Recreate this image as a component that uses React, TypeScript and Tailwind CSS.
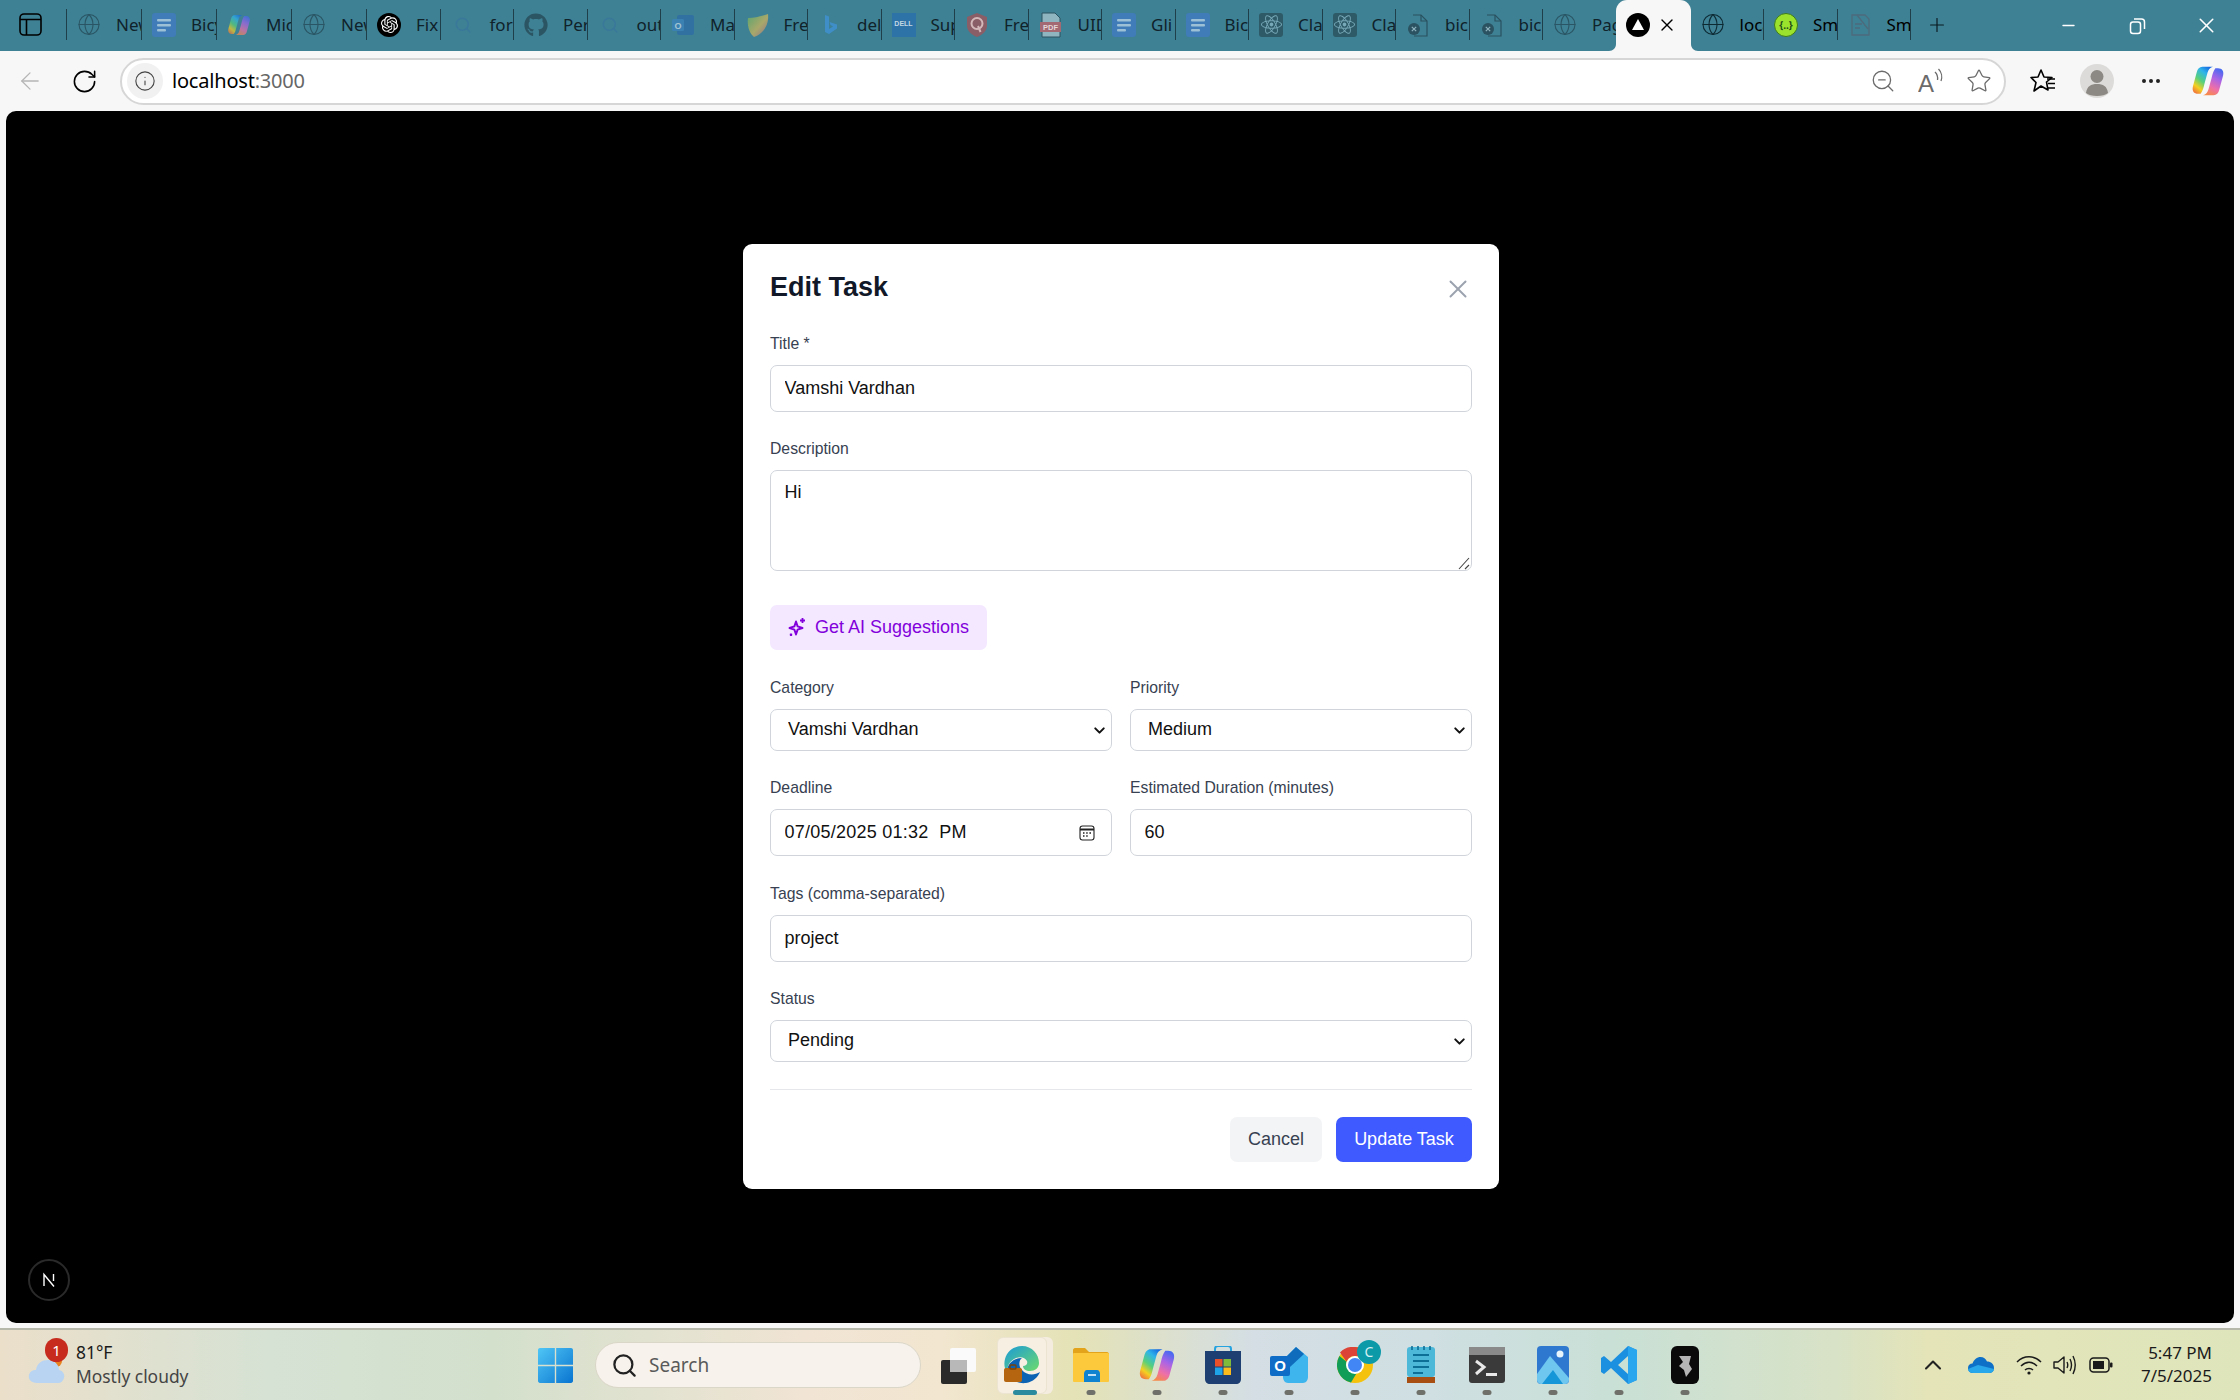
import React from "react";
import { Globe, X, Plus, Minus, Info, ArrowLeft, RotateCw, Star, Search, ZoomOut, ChevronUp, ChevronDown, MoreHorizontal } from "lucide-react";
import { FaGithub, FaReact } from "react-icons/fa";
import { SiOpenai } from "react-icons/si";

const Copilot = ({ s = 24, id = "c" }: { s?: number; id?: string }) => (
  <svg width={s} height={s} viewBox="0 0 24 24">
    <defs>
      <linearGradient id={id + "a"} x1="0.8" y1="0" x2="0.2" y2="1">
        <stop offset="0" stopColor="#1668e0" />
        <stop offset="0.25" stopColor="#2fb4ea" />
        <stop offset="0.55" stopColor="#58d07a" />
        <stop offset="0.8" stopColor="#f5d020" />
        <stop offset="1" stopColor="#f07a3c" />
      </linearGradient>
      <linearGradient id={id + "b"} x1="0.7" y1="0" x2="0.3" y2="1">
        <stop offset="0" stopColor="#4a6af0" />
        <stop offset="0.35" stopColor="#a964e6" />
        <stop offset="0.7" stopColor="#ee6fa8" />
        <stop offset="1" stopColor="#f58a4a" />
      </linearGradient>
    </defs>
    <path d="M8 2H15.5C13.5 2.5 12.3 4 11.7 6L9.5 14C8.8 17 8.3 19 6.8 21H5C2 21 0.7 19 1.3 16L4 6C4.6 3.5 6 2 8 2Z" fill={`url(#${id}a)`} />
    <path d="M16 22H8.5C10.5 21.5 11.7 20 12.3 18L14.5 10C15.2 7 15.7 5 17.2 3H19C22 3 23.3 5 22.7 8L20 18C19.4 20.5 18 22 16 22Z" fill={`url(#${id}b)`} />
  </svg>
);

const DocIcon = () => (
  <svg width="24" height="24" viewBox="0 0 24 24">
    <rect width="24" height="24" rx="3" fill="#3f7cb8" />
    <rect x="5" y="6" width="14" height="2.6" rx="1" fill="#9cc0d6" />
    <rect x="5" y="11" width="14" height="2.6" rx="1" fill="#9cc0d6" />
    <rect x="5" y="16" width="9" height="2.6" rx="1" fill="#9cc0d6" />
  </svg>
);

const GlobeDim = () => <Globe size={25} strokeWidth={1.1} className="text-[#2a5564]" />;
const SearchDim = () => <Search size={18} strokeWidth={2} className="text-[#3a789a] ml-[1px]" />;
const ReactBox = () => (
  <span className="w-[24px] h-[24px] rounded-[3px] bg-[#2e5a67] flex items-center justify-center">
    <FaReact size={21} className="text-[#78a9b8]" />
  </span>
);
const XFile = () => (
  <svg width="24" height="26" viewBox="0 0 24 26" fill="none">
    <path d="M7 3H15L21 9V24H8" stroke="#2a5260" strokeWidth="1.2" />
    <path d="M15 3V9H21" stroke="#2a5260" strokeWidth="1.2" />
    <circle cx="8" cy="17" r="6" fill="#2a5260" />
    <path d="M5.8 14.8L10.2 19.2M10.2 14.8L5.8 19.2" stroke="#8eb3bf" strokeWidth="1.2" />
  </svg>
);

const tabs: [React.ReactNode, string][] = [
  [<GlobeDim />, "New tab"],
  [<DocIcon />, "Bicycle"],
  [<span className="opacity-70"><Copilot id="t1" /></span>, "Microsoft"],
  [<GlobeDim />, "New tab"],
  [<span className="w-[24px] h-[24px] rounded-full bg-black flex items-center justify-center"><SiOpenai size={17} className="text-white" /></span>, "Fix"],
  [<SearchDim />, "for"],
  [<FaGithub size={24} className="text-[#2c5564]" />, "Per"],
  [<SearchDim />, "out"],
  [
    <svg width="24" height="24" viewBox="0 0 24 24" opacity="0.75">
      <rect x="6" y="2" width="17" height="20" rx="2" fill="#2d6ca6" />
      <rect x="1" y="6" width="12" height="12" rx="1.5" fill="#3a83bd" />
      <text x="7" y="15.5" textAnchor="middle" fontSize="9" fontWeight="700" fill="#c7dbe6" fontFamily="Liberation Sans">O</text>
    </svg>,
    "Ma",
  ],
  [
    <svg width="24" height="24" viewBox="0 0 24 24">
      <defs>
        <linearGradient id="shd" x1="0" y1="0" x2="1" y2="1">
          <stop offset="0" stopColor="#5aa56e" />
          <stop offset="0.55" stopColor="#a9a86a" />
          <stop offset="1" stopColor="#8e6f8e" />
        </linearGradient>
      </defs>
      <path d="M3 5C10 5 16 3 23 1C24 10 20 20 9 24C4 20 2 12 3 5Z" fill="url(#shd)" />
    </svg>,
    "Free",
  ],
  [
    <svg width="24" height="24" viewBox="0 0 24 24">
      <path d="M7 2L11 3.5V16L15 13.5L12.5 12L11.5 9L19 11.5V15.5L11 21L7 19Z" fill="#3f8ec7" />
    </svg>,
    "del",
  ],
  [
    <span className="w-[24px] h-[24px] bg-[#2e73a8] flex items-center justify-center text-[7px] font-['Liberation_Sans'] text-[#c3d8e3] font-bold">DELL</span>,
    "Sup",
  ],
  [
    <svg width="24" height="26" viewBox="0 0 24 26" fill="none">
      <path d="M12 1L22 5V14C22 19 17 23 12 25C7 23 2 19 2 14V5Z" fill="#8a5e66" />
      <circle cx="12" cy="11.5" r="5.5" stroke="#d3b8ba" strokeWidth="2" />
      <path d="M13 14L15.5 20" stroke="#d3b8ba" strokeWidth="2" />
    </svg>,
    "Free",
  ],
  [
    <svg width="24" height="26" viewBox="0 0 24 26">
      <path d="M3 1H16L21 6V25H3Z" fill="#8fb5c0" stroke="#2a5260" strokeWidth="1" />
      <rect x="1" y="10" width="21" height="10" fill="#a36a74" />
      <text x="11.5" y="18" textAnchor="middle" fontSize="7.5" fontWeight="700" fill="#e5d8da" fontFamily="Liberation Sans">PDF</text>
    </svg>,
    "UID",
  ],
  [<DocIcon />, "Gli"],
  [<DocIcon />, "Bic"],
  [<ReactBox />, "Cla"],
  [<ReactBox />, "Cla"],
  [<XFile />, "bic"],
  [<XFile />, "bic"],
  [<GlobeDim />, "Pag"],
];

const Tab = ({ icon, label, dark, wide }: { icon: React.ReactNode; label: string; dark?: boolean; wide?: boolean }) => (
  <div className={`${wide ? "w-[75px]" : "w-[73.5px]"} h-[31px] -mt-[2px] shrink-0 flex items-center pl-[10px] border-r border-[#1f3f4b] overflow-hidden`}>
    <span className="w-[24px] shrink-0 flex items-center justify-center">{icon}</span>
    <span className={`ml-[15px] text-[17px] whitespace-nowrap ${dark ? "text-black" : "text-[#10222a]"}`}>{label}</span>
  </div>
);

const TabBar = () => (
  <div className="h-[51px] shrink-0 bg-[#3e8194] flex items-center font-['Noto_Sans',sans-serif]">
    <div className="w-[67px] h-[31px] -mt-[2px] shrink-0 border-r border-[#1f3f4b] flex items-center pl-[19px]">
      <svg width="23" height="23" viewBox="0 0 23 23" fill="none" stroke="#000" strokeWidth="1.6">
        <rect x="1" y="1" width="21" height="21" rx="4" />
        <path d="M1 6.5H22M7.5 6.5V22" />
      </svg>
    </div>
    {tabs.map(([icon, label], i) => (
      <Tab key={i} icon={icon} label={label} wide={i < 4} />
    ))}
    <div className="relative w-[75px] h-[51px] shrink-0 -ml-px bg-[#f7f7f7] rounded-t-[11px] flex items-center pl-[10px] pb-[2px] gap-[7px]">
      <svg className="absolute left-[-7px] bottom-0" width="7" height="7" viewBox="0 0 7 7"><path d="M7 0V7H0C4 7 7 4 7 0Z" fill="#f7f7f7" /></svg>
      <svg className="absolute right-[-7px] bottom-0" width="7" height="7" viewBox="0 0 7 7"><path d="M0 0V7H7C3 7 0 4 0 0Z" fill="#f7f7f7" /></svg>
      <svg width="24" height="24" viewBox="0 0 24 24">
        <circle cx="12" cy="12" r="12" fill="#000" />
        <path d="M12 6L18 17H6Z" fill="#fff" />
      </svg>
      <X size={20} strokeWidth={1.6} className="text-black" />
    </div>
    <Tab icon={<Globe size={25} strokeWidth={1.1} className="text-[#0d2a33]" />} label="localhost" dark />
    <Tab
      icon={
        <span className="w-[24px] h-[24px] rounded-full bg-[#9be22d] border border-[#3d7a20] flex items-center justify-center text-[10px] font-bold text-[#1e4a1a] leading-none">
          {"{..}"}
        </span>
      }
      label="Smart"
      dark
    />
    <Tab
      icon={
        <svg width="22" height="24" viewBox="0 0 22 24" fill="none" stroke="#4c6b7c" strokeWidth="1.3">
          <path d="M3 2H16L20 6V22H3Z" />
          <path d="M6 11H13M6 15H11M8 2L19 16" />
        </svg>
      }
      label="Smart"
      dark
    />
    <span className="ml-[15px] w-[22px] -mt-[2px] flex justify-center">
      <Plus size={30} strokeWidth={1.3} className="text-[#0b1a20]" />
    </span>
    <div className="ml-auto flex items-center text-white h-full">
      <span className="w-[69px] flex justify-center"><Minus size={19} strokeWidth={1.6} /></span>
      <span className="w-[69px] flex justify-center">
        <svg width="17" height="18" viewBox="0 0 17 18" fill="none" stroke="#fff" strokeWidth="1.5">
          <rect x="1.5" y="5" width="10" height="11.5" rx="2.5" />
          <path d="M5 2H12.5C14.5 2 15.5 3 15.5 5V12" />
        </svg>
      </span>
      <span className="w-[68px] flex justify-center"><X size={25} strokeWidth={1.5} /></span>
    </div>
  </div>
);

const Toolbar = () => (
  <div className="h-[60px] shrink-0 bg-[#f7f7f7] flex items-center font-['Noto_Sans',sans-serif]">
    <span className="ml-[6px] w-[48px] flex justify-center"><ArrowLeft size={28} strokeWidth={1.1} className="text-[#b5b5b5]" /></span>
    <span className="ml-[6px] w-[48px] flex justify-center"><RotateCw size={27} strokeWidth={1.4} className="text-black" /></span>
    <div className="ml-[12px] w-[1886px] h-[47px] rounded-full border-2 border-[#d6d6d6] bg-white flex items-center">
      <span className="ml-[5px] w-[36px] h-[36px] rounded-full bg-[#f1f1f1] flex items-center justify-center">
        <Info size={22} strokeWidth={1.2} className="text-[#444]" />
      </span>
      <span className="ml-[9px] text-[20px] leading-none text-black tracking-[-0.2px]">
        localhost<span className="text-[#666]">:3000</span>
      </span>
      <div className="ml-auto mr-[1px] flex items-center text-[#6b6b6b]">
        <span className="w-[48px] flex justify-center"><ZoomOut size={26} strokeWidth={1.2} /></span>
        <span className="w-[48px] flex justify-center">
          <svg width="26" height="28" viewBox="0 0 26 28" fill="none" stroke="#6b6b6b" strokeWidth="1.3">
            <text x="0" y="25" fontSize="24" fill="#6b6b6b" stroke="none" fontFamily="Liberation Sans">A</text>
            <path d="M17 5C19 7 20 10 19.5 13M20.5 2C23.5 5 24.5 10 23 14" />
          </svg>
        </span>
        <span className="w-[48px] flex justify-center"><Star size={26} strokeWidth={1.2} /></span>
      </div>
    </div>
    <span className="ml-[10px] w-[54px] flex justify-center">
      <svg width="28" height="28" viewBox="0 0 28 28" fill="none" stroke="#000" strokeWidth="1.6">
        <path d="M12 3L15 10L23 10.5L17.5 15L19 23L12 19L5 24L7 15.5L2 10.5L9 10Z" strokeLinejoin="round" />
        <path d="M18 12H26M19 16.5H26M19 21H26" />
      </svg>
    </span>
    <span className="w-[54px] flex justify-center">
      <svg width="34" height="34" viewBox="0 0 34 34">
        <circle cx="17" cy="17" r="17" fill="#dcdbd9" />
        <circle cx="17" cy="12.5" r="6.5" fill="#8c8883" />
        <path d="M6 29C7 22 11 20 17 20C23 20 27 22 28 29C24 33 10 33 6 29Z" fill="#8c8883" />
      </svg>
    </span>
    <span className="w-[54px] flex justify-center"><MoreHorizontal size={24} strokeWidth={2} className="text-[#222]" /></span>
    <span className="ml-[3px] w-[54px] flex justify-center"><Copilot s={34} id="t2" /></span>
  </div>
);

const labelCls = "block h-[23px] mb-[10px] text-[15.75px] leading-[23px] text-[#374151]";
const inputCls =
  "block w-full h-[47px] px-[13.5px] rounded-[7px] border border-[#d1d5db] bg-white text-[18px] text-[#111] outline-none";
const selectCls =
  "block w-full h-[42px] pl-[17px] pr-[30px] appearance-none rounded-[7px] border border-[#d1d5db] bg-white text-[18px] text-[#111] outline-none";

const Field = ({ label, children }: { label: string; children: React.ReactNode }) => (
  <div className="min-w-0">
    <label className={labelCls}>{label}</label>
    {children}
  </div>
);

const Select = ({ value }: { value: string }) => (
  <div className="relative">
    <select className={selectCls} defaultValue={value}>
      <option value={value}>{value}</option>
    </select>
    <ChevronDown size={17} strokeWidth={2.8} className="absolute right-[4px] top-[13px] text-[#111] pointer-events-none" />
  </div>
);

const Modal = () => (
  <div className="w-[756px] ml-[2px] -mt-[2px] bg-white rounded-[9px] p-[27px] font-['Liberation_Sans',Arial,sans-serif]">
    <div className="flex items-center justify-between h-[36px] mb-[25px]">
      <h2 className="-mt-[3px] text-[27px] leading-[36px] font-bold text-[#111827]">Edit Task</h2>
      <X size={30} strokeWidth={1.6} className="text-[#9ca3af] mr-[-1px]" />
    </div>
    <form className="flex flex-col gap-[26px]">
      <Field label="Title *">
        <input className={inputCls} defaultValue="Vamshi Vardhan" />
      </Field>
      <div className="-mt-[1px]">
        <Field label="Description">
          <div className="relative">
            <textarea className="block w-full h-[101px] px-[13.5px] py-[8px] resize-none rounded-[7px] border border-[#d1d5db] bg-white text-[18px] leading-[27px] text-[#111] outline-none" defaultValue="Hi" />
            <svg className="absolute right-[1px] bottom-[1px]" width="14" height="14" viewBox="0 0 14 14" fill="none" stroke="#444" strokeWidth="1.1">
              <path d="M2 13L12 2M8 13L12 9" />
            </svg>
          </div>
        </Field>
      </div>
      <button type="button" className="mt-[8px] self-start h-[45px] w-[217px] rounded-[7px] bg-[#f3e8ff] text-[#8200db] text-[18px] flex items-center justify-center gap-[8px]">
        <svg width="19" height="20" viewBox="0 0 19 20" fill="none" stroke="#8200db" strokeWidth="1.9" strokeLinejoin="round">
          <path d="M8 4.5L9.6 9.4L14.5 11L9.6 12.6L8 17.5L6.4 12.6L1.5 11L6.4 9.4Z" />
          <path d="M14.5 1V6M12 3.5H17M3 16.5V19M1.8 17.7H4.2" strokeWidth="1.8" />
        </svg>
        <span>Get AI Suggestions</span>
      </button>
      <div className="grid grid-cols-2 gap-x-[18px]">
        <Field label="Category"><Select value="Vamshi Vardhan" /></Field>
        <Field label="Priority"><Select value="Medium" /></Field>
      </div>
      <div className="grid grid-cols-2 gap-x-[18px] -mt-[1px]">
        <Field label="Deadline">
          <div className="relative">
            <input className={`${inputCls} tracking-[0.25px]`} defaultValue="07/05/2025 01:32  PM" />
            <svg className="absolute right-[17px] top-[16px]" width="16" height="16" viewBox="0 0 16 16" fill="none" stroke="#222" strokeWidth="1.1">
              <rect x="1" y="1" width="14" height="14" rx="2.5" />
              <path d="M1 4.5H15" strokeWidth="2" />
              <path d="M4 8H5.5M7.2 8H8.7M10.4 8H12M4 11H5.5M7.2 11H8.7" strokeWidth="1.5" />
            </svg>
          </div>
        </Field>
        <Field label="Estimated Duration (minutes)">
          <input className={inputCls} defaultValue="60" />
        </Field>
      </div>
      <Field label="Tags (comma-separated)">
        <input className={inputCls} defaultValue="project" />
      </Field>
      <div className="-mt-[1px]">
        <Field label="Status"><Select value="Pending" /></Field>
      </div>
    </form>
    <div className="mt-[27px] pt-[27px] border-t border-[#e5e7eb] flex justify-end gap-[14px]">
      <button type="button" className="w-[92px] h-[45px] rounded-[7px] bg-[#f3f4f6] text-[#374151] text-[18px]">Cancel</button>
      <button type="button" className="w-[136px] h-[45px] rounded-[7px] bg-[#3f5bff] text-white text-[18px]">Update Task</button>
    </div>
  </div>
);

const Dot = ({ active }: { active?: boolean }) => (
  <span className={`absolute bottom-[-1px] left-1/2 -translate-x-1/2 h-[5px] rounded-full ${active ? "w-[24px] bg-[#2a8a9e]" : "w-[9px] bg-[#70706a]"}`} />
);

const Cell = ({ children, dot, active }: { children: React.ReactNode; dot?: boolean; active?: boolean }) => (
  <div className="relative w-[66px] h-[57px] shrink-0 flex items-center justify-center">
    {active && <span className="absolute inset-y-0 left-[5px] right-[11px] rounded-[6px] bg-[#f6efe2] border border-[#ece3d0] shadow-[6px_0_0_#f3ecdf]" />}
    <span className="relative flex">{children}</span>
    {dot && <Dot active={active} />}
  </div>
);

const Taskbar = () => (
  <div className="h-[72px] shrink-0 border-t-2 border-[#b6b9aa] bg-[linear-gradient(90deg,#ebdfca_0%,#d6e2d4_12%,#d3e0cc_22%,#f1e4d4_36%,#f2e6d0_42%,#e4e2b6_48%,#d4dee4_56%,#cfdfe2_64%,#c9e0d6_72%,#d8e2c6_82%,#e4e4b8_86%,#dfe5bb_100%)] flex items-center font-['Noto_Sans',sans-serif] text-[#1a1a1a]">
    <div className="w-[530px] shrink-0 flex items-center pl-[28px]">
      <span className="relative w-[40px] h-[40px] flex items-end">
        <svg width="38" height="30" viewBox="0 0 38 30">
          <circle cx="28" cy="6" r="6" fill="#e8821e" />
          <path d="M9 28C3 28 0 24 1 20C2 16 5 15 8 15C9 8 14 5 20 5C27 5 31 10 31 15C35 16 37 19 36 23C35 26 33 28 30 28Z" fill="#b8d4f2" />
        </svg>
        <span className="absolute top-[-7px] left-[17px] w-[23px] h-[24px] rounded-full bg-[#c62b1e] text-white text-[15px] leading-[24px] text-center">1</span>
      </span>
      <div className="ml-[8px] -mt-[2px] flex flex-col text-[17.4px] leading-[24px]">
        <span>81°F</span>
        <span className="text-[#444]">Mostly cloudy</span>
      </div>
    </div>
    <span className="w-[50px] shrink-0 flex justify-center">
      <svg width="35" height="35" viewBox="0 0 36 36">
        <defs>
          <linearGradient id="win" x1="0" y1="0" x2="1" y2="1">
            <stop offset="0" stopColor="#4fc6f5" />
            <stop offset="1" stopColor="#0a74d0" />
          </linearGradient>
        </defs>
        <path d="M0 2C0 1 1 0 2 0H17.3V17.3H0ZM18.7 0H34C35 0 36 1 36 2V17.3H18.7ZM0 18.7H17.3V36H2C1 36 0 35 0 34ZM18.7 18.7H36V34C36 35 35 36 34 36H18.7Z" fill="url(#win)" />
      </svg>
    </span>
    <div className="ml-[15px] w-[326px] h-[46px] shrink-0 rounded-full bg-[#f7f3ec] border border-[#dad6c8] flex items-center pl-[15px]">
      <Search size={27} strokeWidth={2} className="text-[#222]" />
      <span className="ml-[11px] text-[19px] text-[#5a5a5a]">Search</span>
    </div>
    <div className="ml-[5px] flex items-center">
      <Cell>
        <svg width="36" height="38" viewBox="0 0 36 38">
          <rect x="9" y="2" width="26" height="24" rx="2" fill="#fafafa" />
          <rect x="0" y="14" width="26" height="24" rx="2" fill="#2a2a2a" />
          <rect x="9" y="14" width="17" height="12" fill="#b8b8b8" />
        </svg>
      </Cell>
      <Cell dot active>
        <svg width="36" height="38" viewBox="0 0 36 38" className="-ml-[6px]">
          <defs>
            <linearGradient id="edg" x1="0" y1="0" x2="1" y2="1">
              <stop offset="0" stopColor="#1a9ad8" />
              <stop offset="1" stopColor="#6fdc6a" />
            </linearGradient>
          </defs>
          <path d="M18 0C28 0 35 8 35 17C35 22 31 25 26 25C22 25 19 23 19 20C22 20 24 18 23 15C21 11 15 10 10 13C5 16 3 21 3 26C0 22 0 17 1 13C3 5 10 0 18 0Z" fill="url(#edg)" />
          <path d="M3 26C6 34 14 38 22 37C29 36 34 31 36 26C30 30 22 29 18 24C14 20 15 14 18 12C9 12 3 18 3 26Z" fill="#0d63b3" />
          <rect x="0" y="22" width="18" height="14" rx="2" fill="#b5640f" />
          <rect x="6" y="19" width="6" height="4" rx="1" fill="none" stroke="#7a4308" strokeWidth="1.4" />
        </svg>
      </Cell>
      <Cell dot>
        <svg width="36" height="34" viewBox="0 0 36 34">
          <path d="M0 2C0 1 1 0 2 0H12L16 4H34C35 4 36 5 36 6V12H0Z" fill="#e3a31a" />
          <rect y="5" width="36" height="29" rx="1" fill="#fcc93c" />
          <path d="M11 34V26C11 24 12 22 14 22H24C26 22 27 24 27 26V34Z" fill="#0f82d0" />
          <rect x="15" y="26" width="8" height="2" fill="#bfe0f5" />
        </svg>
      </Cell>
      <Cell dot><Copilot s={38} id="t3" /></Cell>
      <Cell dot>
        <svg width="36" height="38" viewBox="0 0 36 38">
          <path d="M10 6V3C10 1 11 0 13 0H23C25 0 26 1 26 3V6" fill="none" stroke="#24a3e0" strokeWidth="2" />
          <path d="M0 5H36V33C36 36 34 38 31 38H5C2 38 0 36 0 33Z" fill="#1d3f72" />
          <rect x="10" y="13" width="7.5" height="7.5" fill="#e8502a" />
          <rect x="18.5" y="13" width="7.5" height="7.5" fill="#7fba3a" />
          <rect x="10" y="21.5" width="7.5" height="7.5" fill="#1fa3e8" />
          <rect x="18.5" y="21.5" width="7.5" height="7.5" fill="#fbbb1a" />
        </svg>
      </Cell>
      <Cell dot>
        <svg width="38" height="36" viewBox="0 0 38 36">
          <path d="M16 10L26 0L38 10V30C38 33 36 36 33 36H18C15 36 13 33 13 30V10Z" fill="#3fb5ee" />
          <path d="M16 10L26 0L34 7L20 20L13 15Z" fill="#0f6cbd" />
          <rect x="0" y="9" width="20" height="20" rx="2" fill="#0e6cc7" />
          <text x="10" y="24" textAnchor="middle" fontSize="15" fontWeight="700" fill="#fff" fontFamily="Liberation Sans">O</text>
        </svg>
      </Cell>
      <Cell dot>
        <span className="relative flex w-[36px] h-[36px]">
          <svg width="36" height="36" viewBox="0 0 36 36">
            <circle cx="18" cy="18" r="18" fill="#f4c20d" />
            <path d="M18 0A18 18 0 0 1 33.6 9H18A9 9 0 0 0 9.6 14.8L3 5.5A18 18 0 0 1 18 0Z" fill="#db4437" />
            <path d="M2.4 9A18 18 0 0 0 14 35.6L20 25.5A9 9 0 0 1 9.6 14.8Z" fill="#0f9d58" />
            <circle cx="18" cy="18" r="9" fill="#fff" />
            <circle cx="18" cy="18" r="7" fill="#4285f4" />
          </svg>
          <span className="absolute top-[-7px] left-[20px] w-[24px] h-[24px] rounded-full bg-[#0d9aa8] text-[#d4f0f2] text-[14px] leading-[24px] text-center">C</span>
        </span>
      </Cell>
      <Cell dot>
        <svg width="28" height="38" viewBox="0 0 28 38">
          <rect x="0" y="1" width="28" height="30" rx="3" fill="#4db8d8" />
          <rect x="0" y="31" width="28" height="6" fill="#a94e12" />
          <path d="M6 9H22M6 15H22M6 21H22M6 27H16" stroke="#0d6e96" strokeWidth="1.8" />
          <path d="M5 0V4M11 0V4M17 0V4M23 0V4" stroke="#0d6e96" strokeWidth="1.6" />
        </svg>
      </Cell>
      <Cell dot>
        <svg width="36" height="36" viewBox="0 0 36 36">
          <rect width="36" height="36" rx="3" fill="#3a3a3a" />
          <rect width="36" height="8" fill="#8a8a8a" />
          <path d="M7 14L15 20L7 27" stroke="#e8e8e8" strokeWidth="3" fill="none" />
          <rect x="17" y="26" width="11" height="3" fill="#e8e8e8" />
        </svg>
      </Cell>
      <Cell dot>
        <svg width="32" height="38" viewBox="0 0 32 38">
          <rect width="32" height="38" rx="4" fill="#2f78d0" />
          <circle cx="23" cy="8" r="3.5" fill="#e8f4fc" />
          <path d="M0 34V28L13 10L32 32V34C32 36 30 38 28 38H4C2 38 0 36 0 34Z" fill="#6fc7ef" />
          <path d="M5 38L16 24L26 38Z" fill="#1596d8" />
        </svg>
      </Cell>
      <Cell dot>
        <svg width="36" height="38" viewBox="0 0 36 38">
          <path d="M27 0L36 4V34L27 38L10 22L3 28L0 26V12L3 10L10 16ZM27 10L17 19L27 28Z" fill="#1b8fe0" />
          <path d="M27 0L36 4V34L27 38Z" fill="#2aa6ee" />
        </svg>
      </Cell>
      <Cell dot>
        <svg width="28" height="38" viewBox="0 0 28 38">
          <rect width="28" height="38" rx="6" fill="#0a0a0a" />
          <path d="M8 10H20L18 18L21 23L15 31L13 24L8 20L12 16Z" fill="#b5b5b5" />
        </svg>
      </Cell>
    </div>
    <div className="ml-[191px] flex items-center">
      <span className="w-[48px] flex justify-center"><ChevronUp size={28} strokeWidth={1.8} className="text-[#222]" /></span>
      <span className="w-[48px] flex justify-center">
        <svg width="26" height="17" viewBox="0 0 26 17">
          <path d="M5 16C2 16 0 14 0 11C0 8 2 6.5 4.5 6.5C6 2.5 9 0 12.5 0C15.5 0 18 2 19 4.5C23 4.5 26 7 26 11C26 14 24 16 21 16Z" fill="#0f70c8" />
          <path d="M5 16C2 16 0 14 0 12L10 8L26 12C26 14 24 16 21 16Z" fill="#28a8ea" />
        </svg>
      </span>
      <span className="ml-[6px] w-[36px] flex justify-center">
        <svg width="26" height="20" viewBox="0 0 26 20" fill="none" stroke="#1a1a1a" strokeWidth="1.5">
          <path d="M1 7C8 0 18 0 25 7M5 11C10 6 16 6 21 11M9 15C11 13 15 13 17 15" />
          <circle cx="13" cy="18" r="1.6" fill="#1a1a1a" stroke="none" />
        </svg>
      </span>
      <span className="w-[36px] flex justify-center">
        <svg width="24" height="22" viewBox="0 0 24 22" fill="none" stroke="#1a1a1a" strokeWidth="1.4">
          <path d="M1 8H5L11 3V19L5 14H1Z" strokeLinejoin="round" />
          <path d="M14 8C15 10 15 12 14 14M17 5C19 9 19 13 17 17M20 2C23 8 23 14 20 20" />
        </svg>
      </span>
      <span className="w-[36px] flex justify-center">
        <svg width="24" height="16" viewBox="0 0 24 16" fill="none" stroke="#1a1a1a" strokeWidth="1.5">
          <rect x="1" y="1" width="19" height="14" rx="3.5" />
          <rect x="4" y="4" width="11" height="8" fill="#1a1a1a" stroke="none" />
          <rect x="21" y="5.5" width="2.5" height="5" rx="1" fill="#1a1a1a" stroke="none" />
        </svg>
      </span>
    </div>
    <div className="ml-auto mr-[28px] -mt-[2px] flex flex-col items-end text-[17px] leading-[23px]">
      <span>5:47 PM</span>
      <span>7/5/2025</span>
    </div>
  </div>
);

export default function App() {
  return (
    <div className="w-[2240px] h-[1400px] overflow-hidden flex flex-col bg-[#f7f7f7]">
      <TabBar />
      <Toolbar />
      <main className="relative flex-1 mx-[6px] mb-[5px] rounded-[10px] bg-black flex items-center justify-center">
        <Modal />
        <span className="absolute left-[22px] bottom-[22px] w-[42px] h-[42px] rounded-full bg-black border-2 border-[#2a2a2a] flex items-center justify-center">
          <svg width="16" height="16" viewBox="0 0 16 16" fill="none" stroke="#fff" strokeWidth="1.4">
            <path d="M3 14V2.5L13 14.5M12.5 2V9" />
          </svg>
        </span>
      </main>
      <Taskbar />
    </div>
  );
}
